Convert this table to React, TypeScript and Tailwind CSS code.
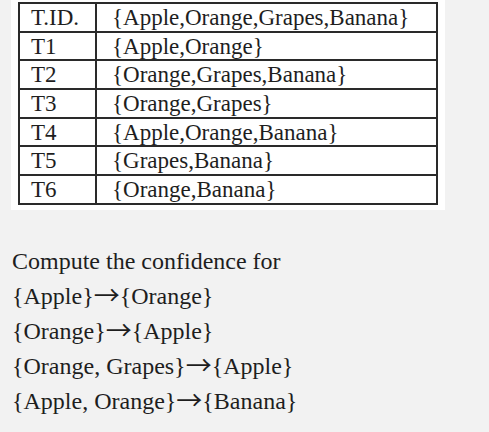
const rows: [string, string][] = [
  ["T.ID.", "{Apple,Orange,Grapes,Banana}"],
  ["T1", "{Apple,Orange}"],
  ["T2", "{Orange,Grapes,Banana}"],
  ["T3", "{Orange,Grapes}"],
  ["T4", "{Apple,Orange,Banana}"],
  ["T5", "{Grapes,Banana}"],
  ["T6", "{Orange,Banana}"],
];

const rules: [string, string][] = [
  ["{Apple}", "{Orange}"],
  ["{Orange}", "{Apple}"],
  ["{Orange, Grapes}", "{Apple}"],
  ["{Apple, Orange}", "{Banana}"],
];

export default function App() {
  return (
    <div className="h-[432px] w-[489px] overflow-hidden bg-[#f2f2f2] font-['Liberation_Serif','Times_New_Roman',serif] text-[#1e1e1e]">
      <div className="ml-[11px] w-[434px] bg-white pl-[7px] pt-[2px] pb-[5px]">
        <table className="w-[420px] border-collapse border-2 border-[#2a2a2a] text-[23px] leading-none">
          <tbody>
            {rows.map(([id, items]) => (
              <tr key={id} className="h-[28.7px]">
                <td className="w-[77px] border-2 border-[#2a2a2a] pl-[11px] align-middle">{id}</td>
                <td className="border-2 border-[#2a2a2a] pl-[15px] align-middle">{items}</td>
              </tr>
            ))}
          </tbody>
        </table>
      </div>
      <div className="mt-[34px] pl-[12px] text-[24px] leading-[35px]">
        <p>Compute the confidence for</p>
        {rules.map(([a, b]) => (
          <p key={a + b}>
            {a}
            <span className="relative top-[1px] font-['Noto_Sans_CJK_SC',sans-serif] text-[26px] leading-[0]">→</span>
            {b}
          </p>
        ))}
      </div>
    </div>
  );
}
